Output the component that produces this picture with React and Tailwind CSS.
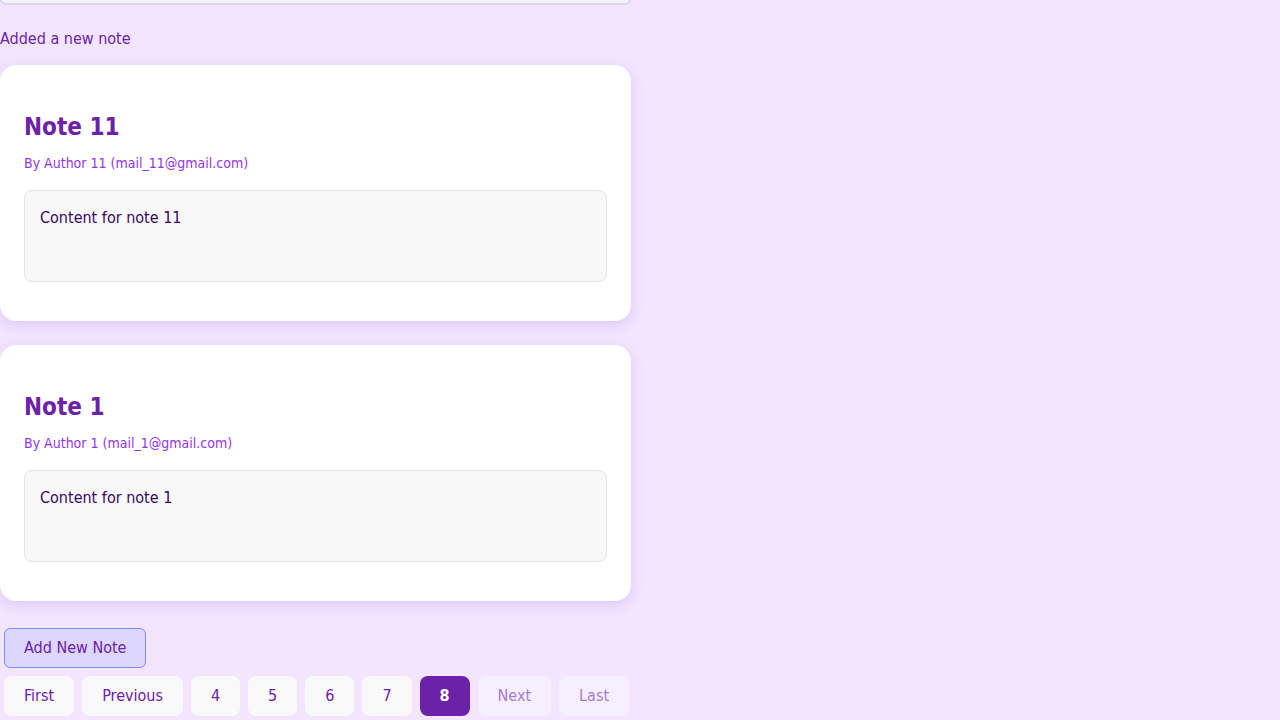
const notes = [
    { id: 11, title: 'Note 11', author: 'Author 11', email: 'mail_11@gmail.com', content: 'Content for note 11' },
    { id: 1, title: 'Note 1', author: 'Author 1', email: 'mail_1@gmail.com', content: 'Content for note 1' },
];

const pages = [4, 5, 6, 7, 8];

function NoteCard({ note }) {
    return (
        <div className="bg-white rounded-2xl shadow-[0_4px_14px_rgba(139,92,246,0.22)] px-6 pt-[46px] pb-[39px]">
            <h2 className="text-2xl leading-8 font-bold text-[#6b21a8]">{note.title}</h2>
            <p className="mt-[10px] text-sm leading-5 text-[#9333ea]">
                By {note.author} ({note.email})
            </p>
            <div className="mt-[17px] h-[92px] bg-[#f8f8f8] border border-[#e3e3e3] rounded-lg px-[15px] py-[15px] text-base leading-6 text-[#3b0764]">
                {note.content}
            </div>
        </div>
    );
}

export default function App() {
    return (
        <div className="min-h-screen bg-[#f3e5fe] font-['DejaVu_Sans_Condensed',sans-serif] overflow-hidden">
            <div className="w-[631px]">
                <div className="h-[6px] bg-[#f4f3f6] border-2 border-t-0 border-[#dcd2fb] rounded-b-lg -mt-[1px]"></div>

                <p className="mt-[22px] text-base leading-6 text-[#6b21a8]">Added a new note</p>

                <div className="mt-[14px] flex flex-col gap-6">
                    {notes.map(note => (
                        <NoteCard key={note.id} note={note} />
                    ))}
                </div>

                <div className="mt-[27px] px-1">
                    <button className="h-10 px-[19px] bg-[#ddd6fe] border border-[#818cf8] rounded-md text-base text-[#6b21a8]">
                        Add New Note
                    </button>

                    <div className="mt-2 flex gap-2">
                        <button className="h-10 px-5 bg-[#f9f9f9] rounded-lg text-base text-[#6b21a8]">First</button>
                        <button className="h-10 px-5 bg-[#f9f9f9] rounded-lg text-base text-[#6b21a8]">Previous</button>
                        {pages.map(p => (
                            p === 8 ? (
                                <button key={p} className="h-10 px-5 bg-[#6b21a8] rounded-lg text-base font-bold text-white">{p}</button>
                            ) : (
                                <button key={p} className="h-10 px-5 bg-[#f9f9f9] rounded-lg text-base text-[#6b21a8]">{p}</button>
                            )
                        ))}
                        <button className="h-10 px-5 bg-[#f6effd] rounded-lg text-base text-[#a67bd4]">Next</button>
                        <button className="h-10 px-5 bg-[#f6effd] rounded-lg text-base text-[#a67bd4]">Last</button>
                    </div>
                </div>
            </div>
        </div>
    );
}
